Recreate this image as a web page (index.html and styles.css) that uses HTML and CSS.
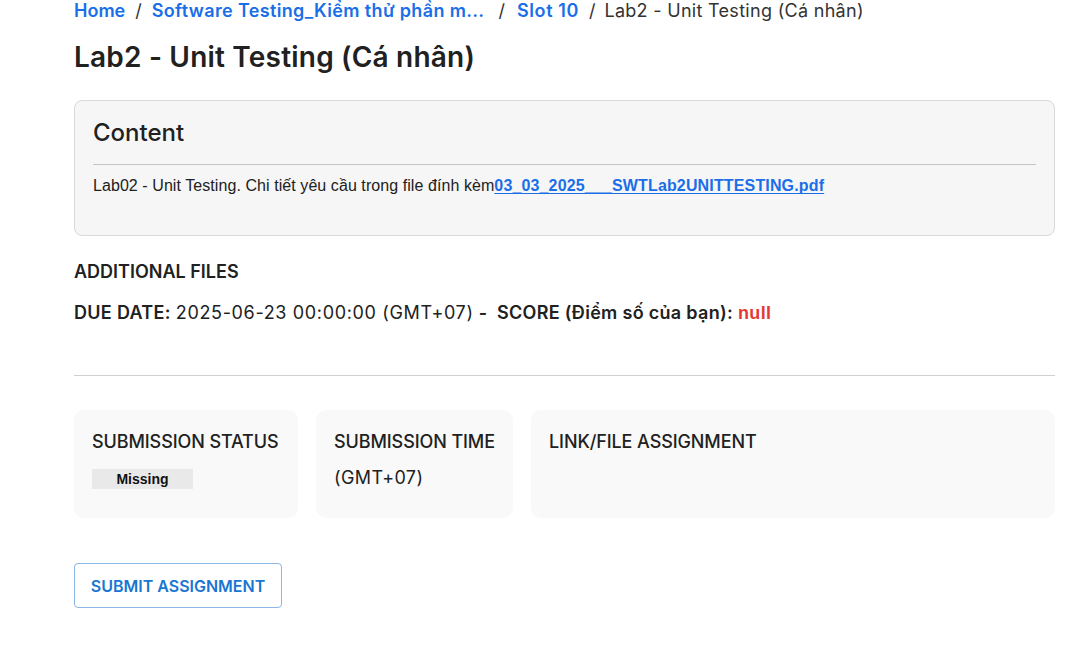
FILE: index.html
```html
<!DOCTYPE html>
<html lang="vi">
<head>
<meta charset="utf-8">
<link rel="stylesheet" href="styles.css">
</head>
<body>
<main class="page">
  <nav class="crumbs">
    <a class="crumb-link" href="#">Home</a>
    <span class="sep">/</span>
    <a class="crumb-link trunc" href="#">Software Testing_Kiểm thử phần m...</a>
    <span class="sep">/</span>
    <a class="crumb-link slot" href="#">Slot 10</a>
    <span class="sep">/</span>
    <span class="crumb-current">Lab2 - Unit Testing (Cá nhân)</span>
  </nav>
  <h1 class="title">Lab2 - Unit Testing (Cá nhân)</h1>

  <section class="content-box">
    <h2 class="content-title">Content</h2>
    <hr class="content-rule">
    <p class="content-text">Lab02 - Unit Testing. Chi tiết yêu cầu trong file đính kèm<a class="file-link" href="#">03_03_2025___SWTLab2UNITTESTING.pdf</a></p>
  </section>

  <h3 class="add-files">ADDITIONAL FILES</h3>
  <p class="due"><b>DUE DATE:</b> <span class="date">2025-06-23 00:00:00 (GMT+07)</span> <b>-&nbsp; SCORE (Điểm số của bạn):</b> <span class="null">null</span></p>

  <hr class="divider">

  <div class="cards">
    <div class="card card-status">
      <div class="card-label">SUBMISSION STATUS</div>
      <span class="badge">Missing</span>
    </div>
    <div class="card card-time">
      <div class="card-label">SUBMISSION TIME</div>
      <div class="card-value">(GMT+07)</div>
    </div>
    <div class="card card-link">
      <div class="card-label">LINK/FILE ASSIGNMENT</div>
    </div>
  </div>

  <button class="submit">SUBMIT ASSIGNMENT</button>
</main>
</body>
</html>
```

FILE: styles.css
```css
* { box-sizing: border-box; }
html, body { margin: 0; padding: 0; background: #fff; }
body {
  font-family: Inter, "Noto Sans", sans-serif;
  color: #212121;
}
.page {
  width: 981px;
  margin-left: 74px;
  padding-top: 0;
}
.crumbs {
  display: flex;
  align-items: center;
  height: 22px;
  font-size: 18px;
  line-height: 22px;
  white-space: nowrap;
}
.crumb-link {
  color: #1a6fe8;
  font-weight: 600;
  text-decoration: none;
}
.trunc { letter-spacing: 0.35px; }
.slot { letter-spacing: 0.6px; }
.sep { color: #333; margin: 0 10px; }
.trunc + .sep { margin-left: 14px; margin-right: 12px; }
.slot + .sep { margin-left: 10px; margin-right: 9px; }
.crumb-current { color: #333; letter-spacing: 0.3px; }
.title {
  margin: 17px 0 0;
  font-size: 28px;
  line-height: 36px;
  font-weight: 600;
  letter-spacing: 0.2px;
  color: #212121;
}
.content-box {
  margin-top: 25px;
  background: #f6f6f6;
  border: 1px solid #d9d9d9;
  border-radius: 8px;
  padding: 18px 18px 30px;
  height: 136px;
}
.content-title {
  margin: 0;
  font-size: 24px;
  line-height: 28px;
  font-weight: 500;
}
.content-rule {
  margin: 17px 0 0;
  border: 0;
  border-top: 1px solid #c4c4c4;
}
.content-text {
  margin: 11px 0 0;
  font-family: "Liberation Sans", Arial, sans-serif;
  font-size: 16px;
  line-height: 20px;
  letter-spacing: 0.07px;
  color: #212121;
}
.file-link {
  color: #1a6fe8;
  font-weight: 700;
  letter-spacing: 0.15px;
  text-decoration: underline;
  text-decoration-skip-ink: none;
  text-underline-offset: 2px;
}
.add-files {
  margin: 25px 0 0;
  font-size: 18px;
  line-height: 22px;
  font-weight: 600;
}
.due {
  margin: 19px 0 0;
  font-size: 18px;
  line-height: 22px;
}
.due b { font-weight: 600; letter-spacing: 0.3px; }
.date { letter-spacing: 0.65px; }
.null {
  color: #e53935;
  font-weight: 700;
  letter-spacing: 0.3px;
  font-family: "Liberation Sans", Arial, sans-serif;
}
.divider {
  margin: 51px 0 0;
  border: 0;
  border-top: 1px solid #d0d0d0;
}
.cards {
  display: flex;
  gap: 18px;
  margin-top: 34px;
}
.card {
  background: #f9f9f9;
  border-radius: 10px;
  height: 108px;
  padding: 21px 18px 20px;
}
.card-status { width: 224px; }
.card-time { width: 197px; }
.card-link { flex: 1; }
.card-label {
  font-size: 18px;
  line-height: 22px;
  font-weight: 500;
  white-space: nowrap;
  letter-spacing: -0.1px;
}
.card-value {
  margin-top: 14px;
  font-size: 18px;
  line-height: 22px;
  letter-spacing: 0.4px;
}
.badge {
  display: block;
  margin-top: 16px;
  width: 101px;
  height: 20px;
  background: #e9e9e9;
  text-align: center;
  font-family: "Liberation Sans", Arial, sans-serif;
  font-weight: 700;
  font-size: 14px;
  line-height: 20px;
  color: #111;
}
.submit {
  margin-top: 45px;
  display: block;
  width: 208px;
  height: 45px;
  border: 1px solid #8cb6e6;
  border-radius: 4px;
  background: #fff;
  color: #1976d2;
  font-family: Inter, "Noto Sans", sans-serif;
  font-size: 16px;
  font-weight: 600;
  padding: 0;
}
```
